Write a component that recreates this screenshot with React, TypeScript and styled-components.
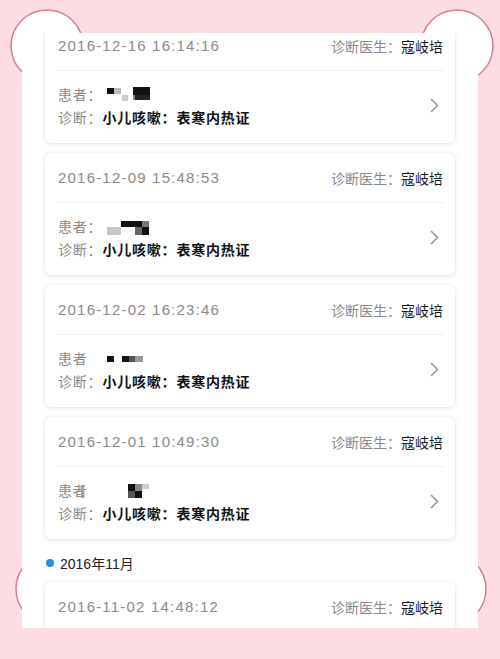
import React from "react";
import styled, { createGlobalStyle } from "styled-components";

const GlobalStyle = createGlobalStyle`
  html, body { margin: 0; padding: 0; background: #fddde3; }
  body { font-family: "Liberation Sans", "Noto Sans CJK SC", sans-serif; }
  * { box-sizing: border-box; }
`;

const Stage = styled.div`
  position: relative;
  width: 500px;
  height: 659px;
  padding: 33px 22px 31px;
  background: #fddde3;
  overflow: hidden;
`;

const Decor = styled.svg`
  position: absolute;
  left: 0;
  top: 0;
  z-index: 0;
`;

const Panel = styled.div`
  position: relative;
  z-index: 1;
  height: 595px;
  background: #ffffff;
  overflow: hidden;
`;

const List = styled.div`
  display: flex;
  flex-direction: column;
  gap: 10px;
  margin-top: -12px;
  padding: 0 23px;
`;

const Card = styled.div`
  flex: none;
  background: #ffffff;
  border-radius: 6px;
  box-shadow: 0 1px 5px rgba(0, 0, 0, 0.12), 0 0 1px rgba(0, 0, 0, 0.08);
`;

const CardHeader = styled.div`
  height: 49px;
  display: flex;
  align-items: center;
  justify-content: space-between;
  padding: 0 12px 0 13px;
`;

const DateText = styled.span`
  font-family: "Liberation Sans", sans-serif;
  font-size: 15px;
  letter-spacing: 1.2px;
  color: #8a8a8a;
`;

const Doctor = styled.span`
  font-family: "Noto Sans CJK SC", sans-serif;
  font-size: 14px;
  color: #8a8a8a;
`;

const DoctorName = styled.span`
  color: #1a1a1a;
`;

const Divider = styled.div`
  height: 1px;
  margin: 0 12px;
  background: #eeeeee;
`;

const CardBody = styled.div`
  display: flex;
  align-items: center;
  padding: 11px 16px 15px 13px;
`;

const Lines = styled.div`
  flex: 1;
  display: flex;
  flex-direction: column;
`;

const Row = styled.div`
  display: flex;
  align-items: center;
  height: 23px;
  font-family: "Noto Sans CJK SC", sans-serif;
  font-size: 14px;
  letter-spacing: 0.8px;
  color: #8a8a8a;
  white-space: nowrap;
`;

const PatientLabel = styled.span`
  display: inline-block;
  width: 49px;
`;

const Mosaic = styled.svg`
  overflow: visible;
  display: block;
`;

const Value = styled.span`
  color: #111111;
  font-weight: 700;
`;

const Chevron = styled.svg`
  flex: none;
  display: block;
`;

const MonthTitle = styled.div`
  flex: none;
  height: 23px;
  padding-top: 4px;
  display: flex;
  align-items: center;
  gap: 6px;
  font-family: "Liberation Sans", "Noto Sans CJK SC", sans-serif;
  font-size: 14px;
  color: #222222;
`;

const Dot = styled.span`
  width: 8px;
  height: 8px;
  margin-left: 1px;
  border-radius: 50%;
  background: #2b8de6;
`;

type Cell = [number, number, number, number, string];

type Visit = {
  date: string;
  label: string;
  cells: Cell[];
};

const visits: Visit[] = [
  {
    date: "2016-12-16 16:14:16",
    label: "患者：",
    cells: [
      [0, 3, 7, 6, "#111"],
      [7, 3, 7, 6, "#bbb"],
      [15, 10, 6, 6, "#ccc"],
      [26, 2, 17, 8, "#111"],
      [28, 10, 15, 5, "#222"],
      [26, 10, 2, 5, "#888"],
    ],
  },
  {
    date: "2016-12-09 15:48:53",
    label: "患者：",
    cells: [
      [0, 10, 14, 8, "#c6c6c6"],
      [14, 4, 21, 6, "#111"],
      [35, 4, 7, 6, "#777"],
      [28, 10, 7, 8, "#666"],
      [35, 10, 7, 8, "#111"],
    ],
  },
  {
    date: "2016-12-02 16:23:46",
    label: "患者",
    cells: [
      [0, 7, 7, 6, "#111"],
      [15, 7, 7, 6, "#111"],
      [22, 7, 6, 6, "#555"],
      [28, 7, 8, 6, "#9a9a9a"],
    ],
  },
  {
    date: "2016-12-01 10:49:30",
    label: "患者",
    cells: [
      [-26, 4, 3, 13, "#a0a0a0"],
      [21, 3, 7, 7, "#111"],
      [28, 3, 7, 7, "#888"],
      [35, 3, 7, 5, "#ccc"],
      [21, 10, 7, 7, "#555"],
      [28, 10, 7, 7, "#111"],
    ],
  },
];

const RecordCard: React.FC<{ visit?: Visit; date: string }> = ({ visit, date }) => (
  <Card>
    <CardHeader>
      <DateText>{date}</DateText>
      <Doctor>
        诊断医生：<DoctorName>寇岐培</DoctorName>
      </Doctor>
    </CardHeader>
    <Divider />
    {visit && (
      <CardBody>
        <Lines>
          <Row>
            <PatientLabel>{visit.label}</PatientLabel>
            <Mosaic width="44" height="18" viewBox="0 0 44 18">
              {visit.cells.map(([x, y, w, h, c], i) => (
                <rect key={i} x={x} y={y} width={w} height={h} fill={c} />
              ))}
            </Mosaic>
          </Row>
          <Row>
            诊断：<Value>小儿咳嗽：表寒内热证</Value>
          </Row>
        </Lines>
        <Chevron width="9" height="15" viewBox="0 0 9 15">
          <polyline
            points="1.5,1.5 7.5,7.5 1.5,13.5"
            fill="none"
            stroke="#9a9a9a"
            strokeWidth="1.7"
            strokeLinecap="round"
            strokeLinejoin="round"
          />
        </Chevron>
      </CardBody>
    )}
  </Card>
);

export default function App() {
  return (
    <>
      <GlobalStyle />
      <Stage>
        <Decor width="500" height="659" viewBox="0 0 500 659">
          <g fill="#ffffff" stroke="#d77c97" strokeWidth="1.5">
            <circle cx="47" cy="46" r="36" />
            <circle cx="457" cy="46" r="36" />
            <circle cx="52" cy="589" r="36" />
            <circle cx="450" cy="589" r="36" />
          </g>
        </Decor>
        <Panel>
          <List>
            {visits.map((v) => (
              <RecordCard key={v.date} visit={v} date={v.date} />
            ))}
            <MonthTitle>
              <Dot />
              2016年11月
            </MonthTitle>
            <RecordCard date="2016-11-02 14:48:12" />
          </List>
        </Panel>
      </Stage>
    </>
  );
}
